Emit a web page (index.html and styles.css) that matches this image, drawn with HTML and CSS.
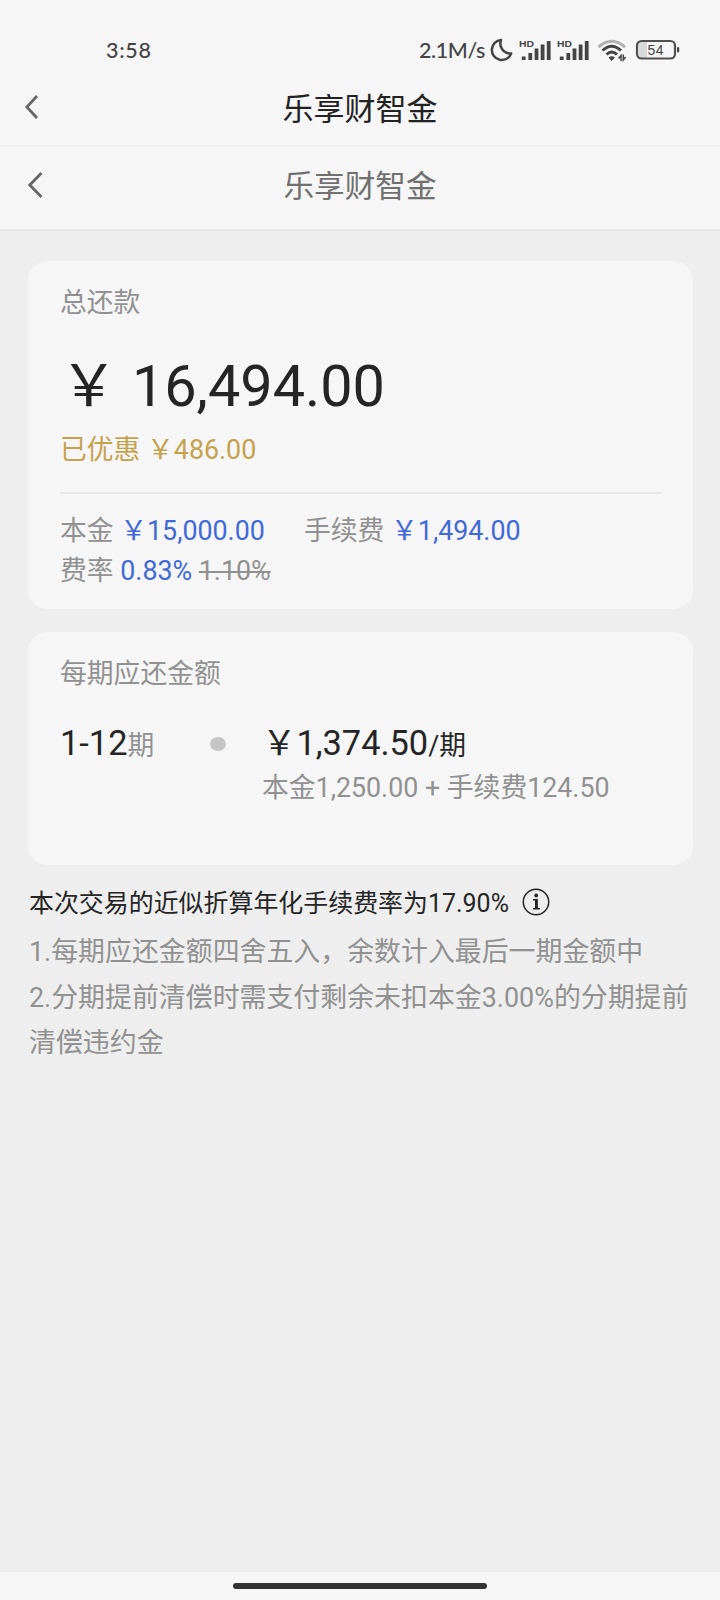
FILE: index.html
```html
<!DOCTYPE html>
<html lang="zh-CN">
<head>
<meta charset="utf-8">
<title>乐享财智金</title>
<link rel="stylesheet" href="styles.css">
</head>
<body>
<div class="screen">
  <header class="status">
    <span class="clock">3:58</span>
    <div class="indicators">
      <span class="speed">2.1M/s</span>
      <svg class="icons" width="196" height="28" viewBox="0 0 196 28">
        <path class="moon" d="M11 4A10 10 0 1 0 21.200 17.500A10 10 0 0 1 11 4Z"/>
        <g id="signal">
          <text class="hd" x="29" y="11" textLength="15" lengthAdjust="spacingAndGlyphs">HD</text>
          <path class="bars" d="M33.700 24V20.500M40.300 24V17M46.500 24V12.500M52.600 24V8.500M58.700 24V5"/>
        </g>
        <use href="#signal" x="38"/>
        <path class="wifi faint" d="M108.500 11Q121.700 -0.500 135 11"/>
        <path class="wifi" d="M112.500 14.500Q121.700 6 131 14.500M116.500 18.500Q121.700 13.500 127 18.500"/>
        <path class="solid" d="M118.500 21.500Q121.700 19 125 21.500L121.700 25Z"/>
        <path class="arrows" d="M131 25V19.500L128.500 22.500M133.300 18.500V24L135.600 21"/>
        <path class="charge" d="M150.500 6H157V22H150.500Q148.500 22 148.500 20V8Q148.500 6 150.500 6Z"/>
        <rect class="battery" x="147" y="5" width="38" height="17.500" rx="4.500"/>
        <rect class="solid" x="187" y="11" width="2.200" height="5.500" rx="1"/>
        <text class="level" x="157.500" y="18.700" textLength="16">54</text>
      </svg>
    </div>
  </header>
  <nav class="nav native">
    <svg class="back" width="14" height="26" viewBox="0 0 14 26"><path d="M12 2L1.800 13L12 24"/></svg>
    <h1 class="title">乐享财智金</h1>
  </nav>
  <nav class="nav web">
    <svg class="back" width="15" height="28" viewBox="0 0 15 28"><path d="M13.500 2L1.800 14L13.500 26"/></svg>
    <h2 class="title">乐享财智金</h2>
  </nav>
  <main class="content">
    <section class="card total">
      <div class="label">总还款</div>
      <div class="amount">￥ 16,494.00</div>
      <div class="saved">已优惠 ￥486.00</div>
      <div class="breakdown">
        <div class="row">
          <span class="principal">本金 <b>￥15,000.00</b></span>
          <span>手续费 <b>￥1,494.00</b></span>
        </div>
        <div class="row">费率&nbsp;<b>0.83%</b>&nbsp;<s>1.10%</s></div>
      </div>
    </section>
    <section class="card plan">
      <div class="label">每期应还金额</div>
      <div class="period">
        <div class="range"><span class="big">1-12</span>期</div>
        <i class="dot"></i>
        <div class="due"><span class="big">￥1,374.50</span>/期</div>
      </div>
      <div class="detail">本金1,250.00 + 手续费124.50</div>
    </section>
    <div class="rate">
      <span class="rate-text">本次交易的近似折算年化手续费率为17.90%</span>
      <svg class="info" width="28" height="28" viewBox="0 0 28 28">
        <circle cx="14" cy="14" r="12.700"/>
        <circle class="tittle" cx="14.200" cy="7.500" r="1.900"/>
        <path d="M11 11.700H15V20.500M11 20.800H18" />
        <path class="stem" d="M14.300 11.500V20.500"/>
      </svg>
    </div>
    <ol class="notes">
      <li>1.每期应还金额四舍五入，余数计入最后一期金额中</li>
      <li>2.分期提前清偿时需支付剩余未扣本金3.00%的分期提前<br>清偿违约金</li>
    </ol>
  </main>
  <footer class="home"><div class="handle"></div></footer>
</div>
</body>
</html>
```
FILE: styles.css
```css
* { box-sizing: border-box; }
body {
  margin: 0;
  font-family: Roboto, "Noto Sans CJK SC", sans-serif;
  font-size: 26.800px;
  color: #919191;
  background: #eee;
}
.screen {
  width: 720px;
  height: 1600px;
  display: flex;
  flex-direction: column;
  overflow: hidden;
}
.status {
  height: 72px;
  padding: 36px 34px 0 106px;
  display: flex;
  justify-content: space-between;
  background: #f6f6f6;
  color: #444;
  font: 500 21.500px/28px Lato, sans-serif;
}
.clock { letter-spacing: 0.700px; }
.indicators { display: flex; }
.speed { width: 71px; white-space: nowrap; letter-spacing: -0.400px; }
.icons { display: block; }
.icons path { fill: none; stroke: #444; }
.icons .moon { stroke-width: 2.500; stroke-linejoin: round; }
.icons .bars { stroke-width: 3.800; stroke-linecap: butt; }
.icons .wifi { stroke-width: 3; }
.icons .faint { stroke: #b0b0b0; }
.icons .arrows { stroke-width: 1.500; }
.icons .solid { fill: #444; stroke: none; }
.icons .charge { fill: #d8d8d8; stroke: none; }
.icons .battery { fill: none; stroke: #505050; stroke-width: 2.200; }
.icons text { fill: #444; font-family: "Liberation Sans", sans-serif; }
.icons .hd { font-size: 9.500px; font-weight: 700; }
.icons .level { font-size: 14px; }
.nav {
  display: grid;
  grid-template-columns: 60px 1fr 60px;
  align-items: center;
  background: #f6f6f6;
}
.native { height: 75px; padding-bottom: 4px; border-bottom: 2px solid #efefef; }
.web { height: 84px; padding-bottom: 6px; border-bottom: 2px solid #e8e8e8; }
.back { margin-left: 25px; fill: none; stroke: #666; stroke-width: 2.800; }
.web .back { margin-left: 28px; }
.title {
  margin: 0;
  text-align: center;
  font: 400 31px/40px "Noto Sans CJK SC", sans-serif;
  color: #222;
}
.web .title { font-size: 30.600px; margin-top: -3px; color: #707070; }
.content {
  flex: 1;
  padding: 30px 27px 0 28px;
}
.card {
  background: #f6f6f6;
  border-radius: 20px;
  padding: 0 32px;
}
.total { height: 348px; padding-top: 22px; }
.label { height: 40px; line-height: 40px; }
.amount { font-size: 57.600px; line-height: 80px; margin-top: 24px; color: #252525; }
.saved { line-height: 40px; margin-top: 3px; color: #c4a24e; }
.breakdown { margin-top: 22px; border-top: 2px solid #e8e8e8; padding-top: 17px; }
.row { display: flex; line-height: 40px; }
.principal { width: 244px; }
.row b { font-weight: 400; color: #4169d8; }
.row s { text-decoration-thickness: 1.500px; }
.plan { height: 233px; margin-top: 23px; padding-top: 22px; }
.period { display: flex; height: 50px; line-height: 50px; margin-top: 24px; }
.big { font-size: 34.400px; color: #252525; }
.range { width: 150px; }
.dot { width: 16px; height: 14px; border-radius: 50%; background: #c5c5c5; margin-top: 19px; }
.due { margin-left: 36px; color: #252525; }
.detail { line-height: 40px; margin: 0 0 0 202px; white-space: nowrap; }
.rate {
  display: flex;
  align-items: center;
  height: 40px;
  margin: 17px 0 0 1px;
  font-size: 24.950px;
  color: #252525;
}
.rate-text { padding-bottom: 3px; }
.info { margin-left: 13px; fill: none; stroke: #252525; stroke-width: 1.500; }
.info .tittle { fill: #252525; stroke: none; }
.info .stem { stroke-width: 2.600; }
.notes { list-style: none; margin: 8px 0 0 1px; padding: 0; font-size: 26.920px; line-height: 45.500px; white-space: nowrap; }
.home { height: 28px; background: #f6f6f6; padding-top: 11px; }
.handle { width: 254px; height: 6px; border-radius: 3px; background: #333; margin: 0 auto; }
```
